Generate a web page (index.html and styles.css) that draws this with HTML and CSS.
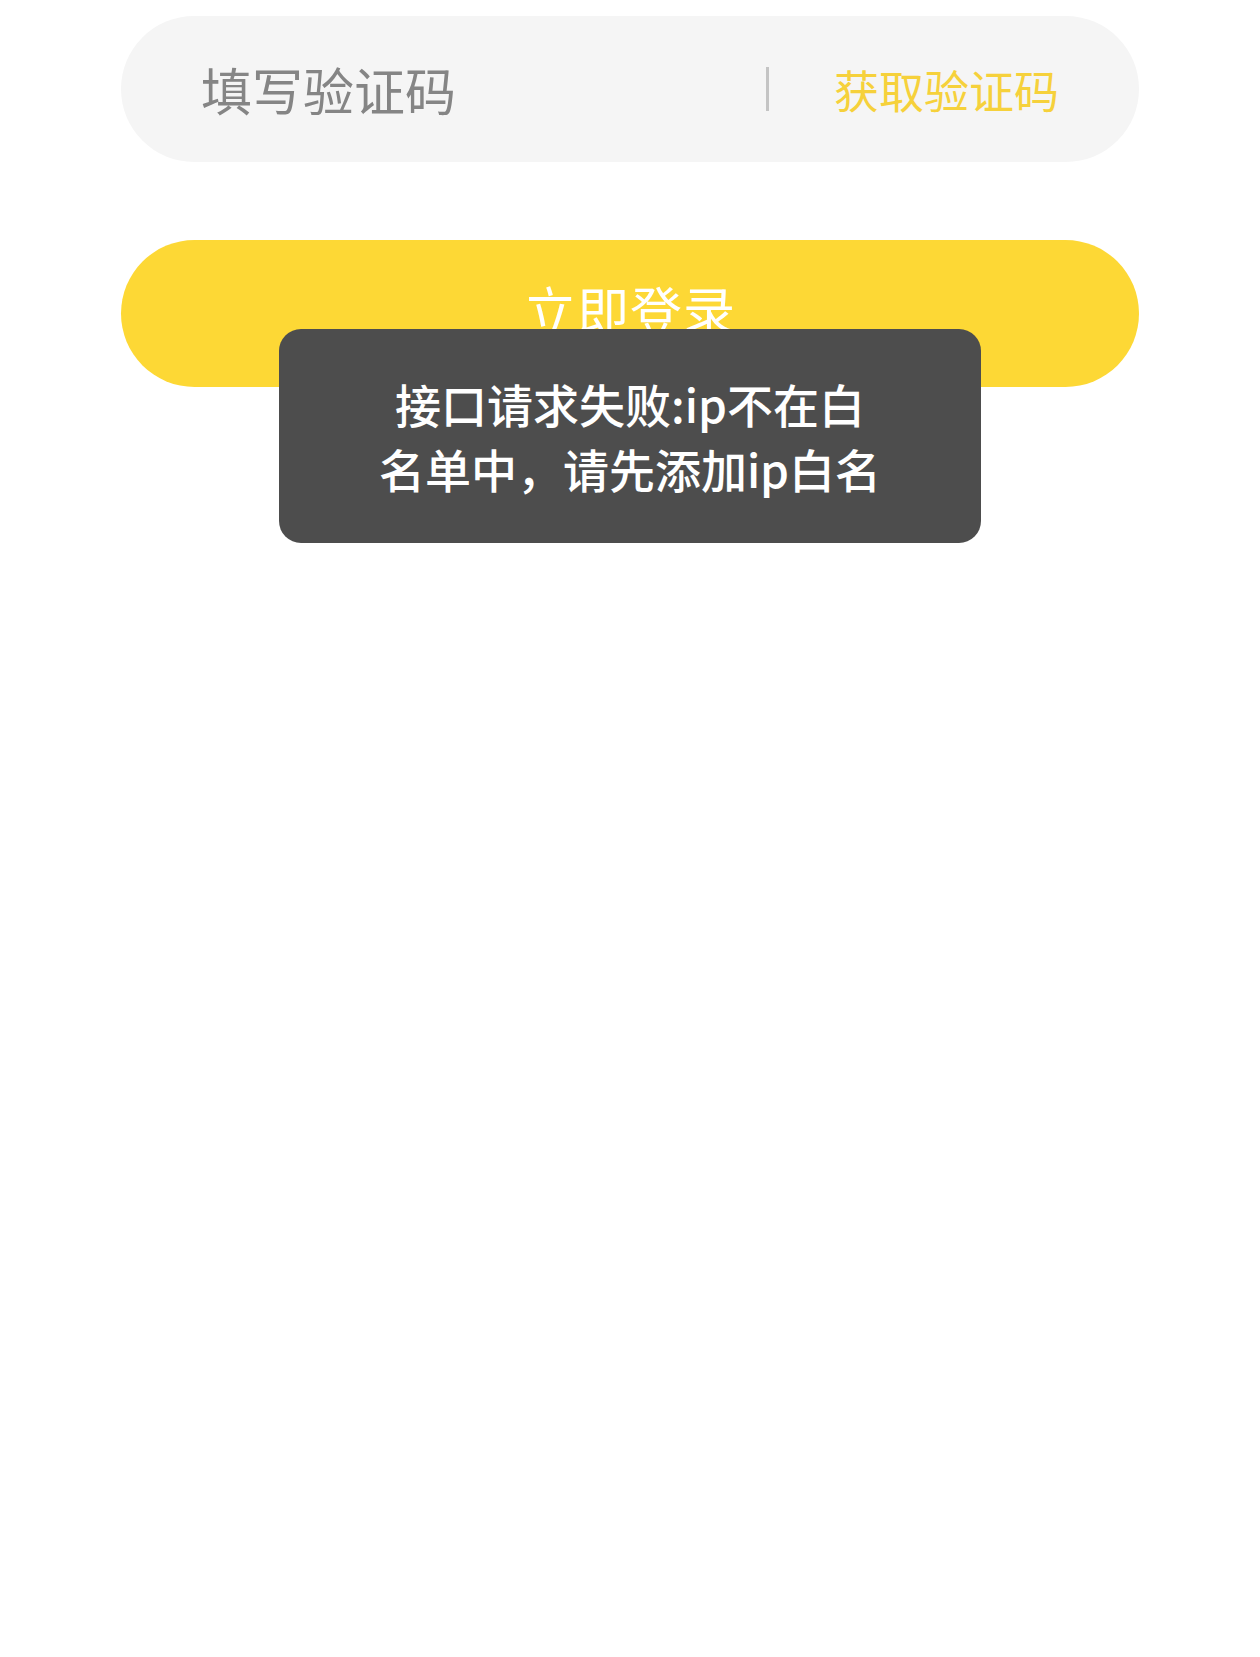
FILE: index.html
```html
<!DOCTYPE html>
<html lang="zh-CN">
<head>
<meta charset="utf-8">
<title>登录</title>
<link rel="stylesheet" href="styles.css">
</head>
<body>
<main class="page">
  <div class="code-row">
    <input class="code-input" type="text" placeholder="填写验证码">
    <span class="divider"></span>
    <button class="get-code" type="button">获取验证码</button>
  </div>
  <button class="login-btn" type="button">立即登录</button>
</main>
<div class="toast">
  <p class="toast-text">接口请求失败:ip不在白<br>名单中，请先添加ip白名</p>
</div>
</body>
</html>
```

FILE: styles.css
```css
html, body {
  margin: 0;
  padding: 0;
  background: #ffffff;
}

body {
  width: 1260px;
  height: 1657px;
  font-family: "Noto Sans CJK SC", "Noto Sans", sans-serif;
  position: relative;
  overflow: hidden;
}

.page {
  padding: 16px 121px 0;
  display: flex;
  flex-direction: column;
  gap: 78px;
}

.code-row {
  height: 146px;
  border-radius: 73px;
  background: #f5f5f5;
  display: flex;
  align-items: center;
  padding: 0 80px;
}

.code-input {
  flex: 1;
  min-width: 0;
  border: none;
  outline: none;
  background: transparent;
  padding: 0;
  font-family: inherit;
  font-size: 51px;
  color: #333;
}

.code-input::placeholder {
  color: #858585;
}

.divider {
  width: 3px;
  height: 44px;
  background: #c4c4c4;
  margin-right: 65px;
}

.get-code {
  border: none;
  background: transparent;
  padding: 0;
  font-family: inherit;
  font-size: 45px;
  color: #f6d13b;
  line-height: 1;
}

.login-btn {
  height: 147px;
  border: none;
  border-radius: 74px;
  background: #fdd835;
  color: #ffffff;
  font-family: inherit;
  font-size: 52px;
  letter-spacing: 1px;
  padding: 0 0 10px;
}

.toast {
  position: absolute;
  left: 279px;
  top: 329px;
  width: 702px;
  box-sizing: border-box;
  padding: 42px 40px;
  background: #4d4d4d;
  border-radius: 22px;
}

.toast-text {
  margin: 0;
  color: #ffffff;
  font-size: 46px;
  font-weight: 500;
  line-height: 65px;
  text-align: center;
}
```
